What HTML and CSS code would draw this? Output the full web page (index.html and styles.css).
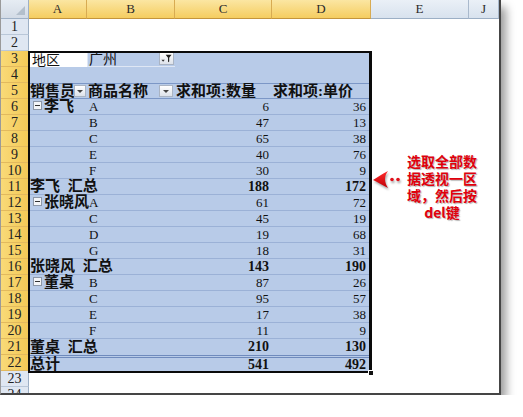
FILE: index.html
```html
<!DOCTYPE html>
<html lang="zh">
<head>
<meta charset="utf-8">
<title>数据透视表</title>
<link rel="stylesheet" href="styles.css">
</head>
<body>
<div class="frame">
  <div class="sheet">
    <!-- header row -->
    <div class="corner"></div>
    <div class="ch on">A</div><div class="ch on">B</div><div class="ch on">C</div><div class="ch on">D</div><div class="ch">E</div><div class="ch">J</div>

    <!-- row 1 -->
    <div class="rh">1</div><div class="w"></div><div class="w"></div><div class="w"></div><div class="w"></div><div class="w"></div><div class="w"></div>
    <!-- row 2 -->
    <div class="rh">2</div><div class="w"></div><div class="w"></div><div class="w"></div><div class="w"></div><div class="w"></div><div class="w"></div>
    <!-- row 3 -->
    <div class="rh on">3</div>
    <div class="p act cj">地区</div>
    <div class="p cj page-field">广州<span class="fbtn"><svg viewBox="0 0 14 13" width="14" height="13"><path d="M6 2h7l-2.8 3.6v4.4l-1.4 1v-5.4z" fill="#222"/><path d="M1 8h4l-2 2.4z" fill="#333"/></svg></span></div>
    <div class="p"></div><div class="p"></div><div class="w"></div><div class="w"></div>
    <!-- row 4 -->
    <div class="rh on">4</div><div class="p"></div><div class="p"></div><div class="p"></div><div class="p"></div><div class="w"></div><div class="w"></div>
    <!-- row 5 -->
    <div class="rh on">5</div>
    <div class="p hd bc">销售员<span class="dd"></span></div>
    <div class="p hd bc">商品名称<span class="dd dd-b"></span></div>
    <div class="p hd bc">求和项:数量</div>
    <div class="p hd bc">求和项:单价</div>
    <div class="w"></div><div class="w"></div>
    <!-- rows 6-22 -->
    <div class="rh on">6</div><div class="p ln bc"><span class="tog"></span>李飞</div><div class="p ln l">A</div><div class="p ln n">6</div><div class="p ln n d">36</div><div class="w"></div><div class="w"></div>
    <div class="rh on">7</div><div class="p ln"></div><div class="p ln l">B</div><div class="p ln n">47</div><div class="p ln n d">13</div><div class="w"></div><div class="w"></div>
    <div class="rh on">8</div><div class="p ln"></div><div class="p ln l">C</div><div class="p ln n">65</div><div class="p ln n d">38</div><div class="w"></div><div class="w"></div>
    <div class="rh on">9</div><div class="p ln"></div><div class="p ln l">E</div><div class="p ln n">40</div><div class="p ln n d">76</div><div class="w"></div><div class="w"></div>
    <div class="rh on">10</div><div class="p ln"></div><div class="p ln l">F</div><div class="p ln n">30</div><div class="p ln n d">9</div><div class="w"></div><div class="w"></div>
    <div class="rh on">11</div><div class="p ln bc sum">李飞 汇总</div><div class="p ln"></div><div class="p ln n bn">188</div><div class="p ln n d bn">172</div><div class="w"></div><div class="w"></div>
    <div class="rh on">12</div><div class="p ln bc"><span class="tog"></span>张晓风</div><div class="p ln l">A</div><div class="p ln n">61</div><div class="p ln n d">72</div><div class="w"></div><div class="w"></div>
    <div class="rh on">13</div><div class="p ln"></div><div class="p ln l">C</div><div class="p ln n">45</div><div class="p ln n d">19</div><div class="w"></div><div class="w"></div>
    <div class="rh on">14</div><div class="p ln"></div><div class="p ln l">D</div><div class="p ln n">19</div><div class="p ln n d">68</div><div class="w"></div><div class="w"></div>
    <div class="rh on">15</div><div class="p ln"></div><div class="p ln l">G</div><div class="p ln n">18</div><div class="p ln n d">31</div><div class="w"></div><div class="w"></div>
    <div class="rh on">16</div><div class="p ln bc sum">张晓风 汇总</div><div class="p ln"></div><div class="p ln n bn">143</div><div class="p ln n d bn">190</div><div class="w"></div><div class="w"></div>
    <div class="rh on">17</div><div class="p ln bc"><span class="tog"></span>董桌</div><div class="p ln l">B</div><div class="p ln n">87</div><div class="p ln n d">26</div><div class="w"></div><div class="w"></div>
    <div class="rh on">18</div><div class="p ln"></div><div class="p ln l">C</div><div class="p ln n">95</div><div class="p ln n d">57</div><div class="w"></div><div class="w"></div>
    <div class="rh on">19</div><div class="p ln"></div><div class="p ln l">E</div><div class="p ln n">17</div><div class="p ln n d">38</div><div class="w"></div><div class="w"></div>
    <div class="rh on">20</div><div class="p ln"></div><div class="p ln l">F</div><div class="p ln n">11</div><div class="p ln n d">9</div><div class="w"></div><div class="w"></div>
    <div class="rh on">21</div><div class="p bc sum">董桌 汇总</div><div class="p"></div><div class="p n bn">210</div><div class="p n d bn">130</div><div class="w"></div><div class="w"></div>
    <div class="rh on">22</div><div class="p tot bc">总计</div><div class="p tot"></div><div class="p tot n bn">541</div><div class="p tot n d bn">492</div><div class="w"></div><div class="w"></div>
    <!-- row 23 -->
    <div class="rh">23</div><div class="w"></div><div class="w"></div><div class="w"></div><div class="w"></div><div class="w"></div><div class="w"></div>
    <!-- row 24 (partial) -->
    <div class="rh">24</div><div class="w"></div><div class="w"></div><div class="w"></div><div class="w"></div><div class="w"></div><div class="w"></div>
  </div>

  <div class="selection"><span class="handle"></span></div>

  <svg class="arrow" viewBox="0 0 32 20" width="32" height="20">
    <defs>
      <linearGradient id="ag" x1="0" y1="0" x2="0" y2="1">
        <stop offset="0" stop-color="#ff2a2a"/>
        <stop offset="1" stop-color="#c00008"/>
      </linearGradient>
    </defs>
    <path d="M1 10 C6 7 10 4 16 1 C12 6 12 12 16 18 C10 15 6 12 1 10 Z" fill="url(#ag)"/>
    <circle cx="20" cy="9.5" r="1.8" fill="#e0101a"/>
    <circle cx="26" cy="9.5" r="1.8" fill="#e0101a"/>
  </svg>
  <div class="note">选取全部数<br>据透视一区<br>域，然后按<br>del键</div>
</div>
</body>
</html>
```

FILE: styles.css
```css
* { box-sizing: border-box; }

body {
  margin: 0;
  background: #ffffff;
  font-family: "Liberation Serif", "Noto Sans CJK SC", serif;
}

.frame {
  position: relative;
  width: 501px;
  height: 395px;
  background: #ffffff;
  border-left: 1px solid #9a9a9a;
  border-right: 2px solid #454545;
  border-bottom: 2px solid #454545;
  box-shadow: 5px 7px 9px rgba(0, 0, 0, 0.4);
  overflow: hidden;
}

.sheet {
  display: grid;
  grid-template-columns: 28px 58px 88px 97px 99px 98px 30px;
  grid-template-rows: 19px repeat(23, 16px) 8px;
}

/* headers */
.corner {
  position: relative;
  background: linear-gradient(#e6ecf3, #d3dbe6);
  border-right: 1px solid #9eb0c6;
  border-bottom: 1px solid #9eb0c6;
}
.corner::after {
  content: "";
  position: absolute;
  right: 3px;
  bottom: 3px;
  border-left: 9px solid transparent;
  border-bottom: 9px solid #b3bfcc;
}

.ch {
  font-size: 13px;
  line-height: 18px;
  text-align: center;
  color: #2b2b2b;
  background: linear-gradient(#eaf0f7, #d8e2ee);
  border-right: 1px solid #a9b9cc;
  border-bottom: 1px solid #9cafc5;
}
.ch.on {
  background: linear-gradient(#fbe6a2, #f5cd60);
  border-right-color: #d8ab52;
  border-bottom-color: #c4953c;
}

.rh {
  font-size: 14px;
  line-height: 16px;
  text-align: center;
  color: #222;
  background: #dfe7f2;
  border-right: 1px solid #9cafc5;
  border-bottom: 1px solid #b9c7d8;
  overflow: hidden;
}
.rh.on {
  background: linear-gradient(90deg, #f9da78, #f3c957);
  border-right-color: #c4953c;
  border-bottom-color: #e2b95e;
}

.w { background: #ffffff; }

/* pivot cells */
.p {
  position: relative;
  background: #b8cbe8;
  font-size: 13px;
  line-height: 16px;
  padding: 0 3px;
  white-space: nowrap;
  color: #111;
}
.p.act { background: #ffffff; }
.p.page-field {
  border-left: 1px solid #dfe7f4;
  border-bottom: 1px solid #dfe7f4;
  line-height: 15px;
  padding-left: 1px;
}
.l { padding-left: 2px; }
.n { text-align: right; }
.d { padding-right: 5px; }
.ln { border-bottom: 1px solid #9bb1d6; line-height: 15px; }
.hd {
  border-top: 1px solid #7c97c6;
  border-bottom: 1px solid #7c97c6;
  line-height: 14px;
}
.tot { border-top: 3px double #6f8bbd; line-height: 13px; }

.cj {
  font-family: "Noto Sans CJK SC", sans-serif;
  font-size: 14px;
}
.bc {
  z-index: 1;
  font-family: "Liberation Serif", "Noto Sans CJK SC", sans-serif;
  font-weight: bold;
  font-size: 15px;
  padding-left: 1px;
}
.sum { word-spacing: 4px; }
.bn {
  font-weight: bold;
  font-size: 14px;
}

.tog {
  display: inline-block;
  position: relative;
  width: 9px;
  height: 9px;
  margin: 0 2px 0 3px;
  border: 1px solid #8d98a8;
  background: #f3f5f8;
  vertical-align: 1px;
}
.tog::after {
  content: "";
  position: absolute;
  left: 1px;
  right: 1px;
  top: 3px;
  height: 1px;
  background: #333;
}

.dd {
  position: absolute;
  right: 1px;
  top: 1px;
  width: 12px;
  height: 12px;
  border: 1px solid #aab4c3;
  background: linear-gradient(#ffffff, #dde2ea);
}
.dd-b { right: 2px; width: 14px; }
.dd::after {
  content: "";
  position: absolute;
  left: 50%;
  top: 4px;
  margin-left: -3px;
  border-left: 3px solid transparent;
  border-right: 3px solid transparent;
  border-top: 3px solid #444;
}

.fbtn {
  position: absolute;
  right: 1px;
  top: 1px;
  width: 15px;
  height: 13px;
  border: 1px solid #aab4c3;
  background: linear-gradient(#ffffff, #dde2ea);
  line-height: 0;
}
.fbtn svg { display: block; width: 13px; height: 11px; }

/* selection outline over the range A3:D22 */
.selection {
  position: absolute;
  z-index: 2;
  left: 27px;
  top: 51px;
  width: 344px;
  height: 322px;
  border: 2px solid #0a0a0a;
  border-right-width: 3px;
}
.handle {
  position: absolute;
  right: -5px;
  bottom: -5px;
  width: 6px;
  height: 6px;
  background: #111;
  border: 1px solid #fff;
}

/* annotation */
.arrow {
  position: absolute;
  left: 371px;
  top: 170px;
  filter: drop-shadow(1px 2px 1px rgba(0, 0, 0, 0.35));
}
.note {
  position: absolute;
  left: 394px;
  top: 153px;
  width: 94px;
  text-align: center;
  font-family: "Noto Sans CJK SC", sans-serif;
  font-weight: bold;
  font-size: 14px;
  line-height: 17px;
  color: #e0000c;
  text-shadow: 1px 1px 1px rgba(0, 0, 0, 0.3);
}
```
